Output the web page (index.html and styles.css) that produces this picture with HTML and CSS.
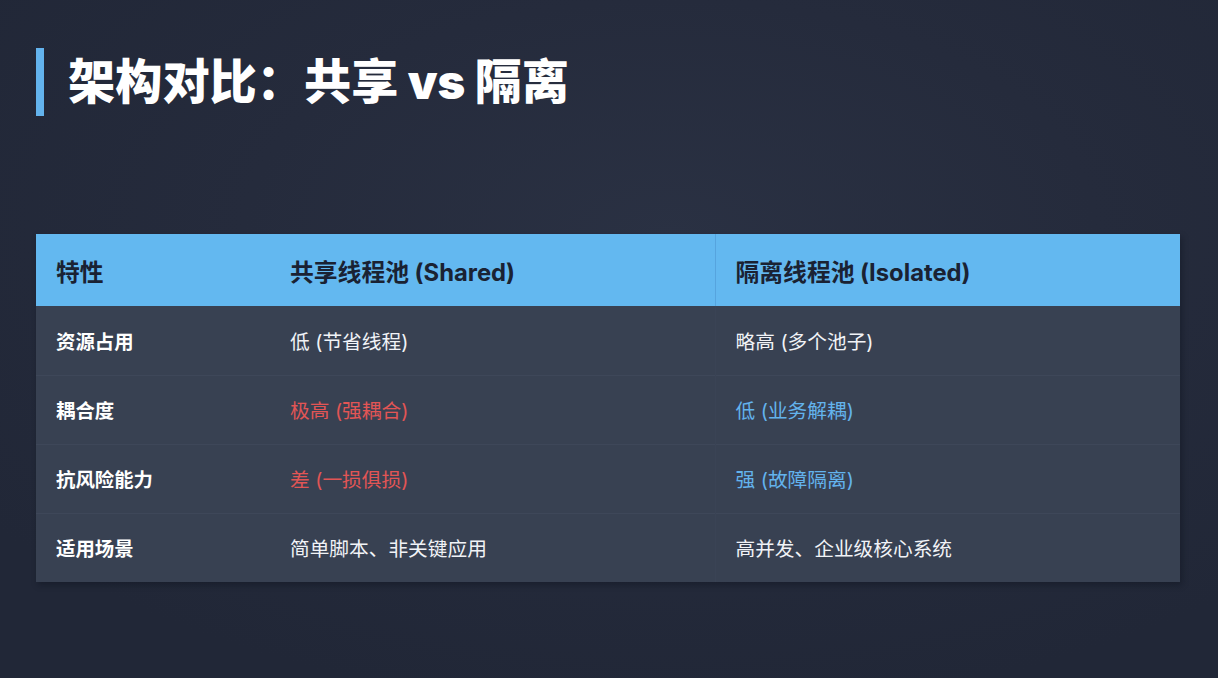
FILE: index.html
```html
<!DOCTYPE html>
<html lang="zh-CN">
<head>
<meta charset="utf-8">
<link rel="stylesheet" href="styles.css">
</head>
<body>
<div class="slide">
  <h1 class="title">架构对比：共享 vs 隔离</h1>
  <table class="cmp">
    <colgroup>
      <col class="c1"><col class="c2"><col class="c3">
    </colgroup>
    <thead>
      <tr><th>特性</th><th>共享线程池 (Shared)</th><th class="last">隔离线程池 (Isolated)</th></tr>
    </thead>
    <tbody>
      <tr><td class="key">资源占用</td><td>低 (节省线程)</td><td class="last">略高 (多个池子)</td></tr>
      <tr><td class="key">耦合度</td><td class="bad">极高 (强耦合)</td><td class="last good">低 (业务解耦)</td></tr>
      <tr><td class="key">抗风险能力</td><td class="bad">差 (一损俱损)</td><td class="last good">强 (故障隔离)</td></tr>
      <tr><td class="key">适用场景</td><td>简单脚本、非关键应用</td><td class="last">高并发、企业级核心系统</td></tr>
    </tbody>
  </table>
</div>
</body>
</html>
```

FILE: styles.css
```css
html, body {
  margin: 0;
  padding: 0;
  width: 1218px;
  height: 678px;
  overflow: hidden;
}
body {
  background: radial-gradient(ellipse 70% 70% at 55% 35%, #2a3143 0%, #252b3c 50%, #212737 100%);
  font-family: Inter, "Noto Sans CJK SC", sans-serif;
  color: #ffffff;
}
.slide {
  padding: 48px 38px 0 36px;
}
.title {
  margin: 0;
  border-left: 8px solid #63b3ed;
  padding-left: 24px;
  font-size: 47.2px;
  line-height: 68px;
  font-weight: 900;
  color: #ffffff;
}
.cmp {
  margin-top: 118px;
  width: 1144px;
  border-collapse: collapse;
  background: #384152;
  box-shadow: 2px 3px 6px rgba(10, 14, 24, 0.35);
  table-layout: fixed;
}
.c1 { width: 234px; }
.c2 { width: 445px; }
.c3 { width: 465px; }
.cmp th {
  background: #63b8f0;
  color: #1a2233;
  text-align: left;
  font-size: 23.8px;
  font-weight: 700;
  height: 72px;
  padding: 0 20px;
  box-sizing: border-box;
}
.cmp th.last {
  border-left: 1px solid rgba(70, 140, 200, 0.45);
}
.cmp td.last {
  border-left: 1px solid #3a4355;
}
.cmp td {
  height: 69px;
  padding: 0 20px;
  font-size: 19.7px;
  color: #f1f3f7;
  box-sizing: border-box;
  border-top: 1px solid #3e4759;
}
.cmp tbody tr:first-child td { border-top: none; }
.cmp td.key {
  font-weight: 700;
  font-size: 19.4px;
  color: #ffffff;
}
.cmp td.bad { color: #e25555; }
.cmp td.good { color: #63b3ed; }
```
